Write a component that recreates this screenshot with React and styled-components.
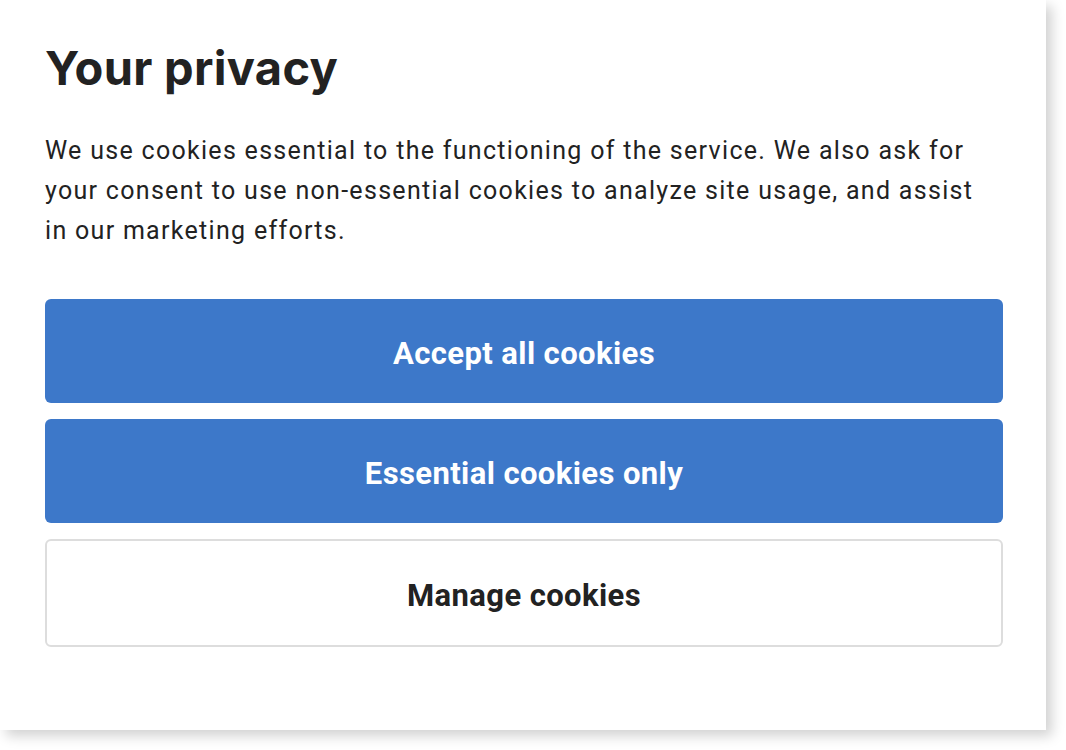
import React from 'react';
import styled, { createGlobalStyle } from 'styled-components';

const GlobalStyle = createGlobalStyle`
  html, body {
    margin: 0;
    padding: 0;
    background: #ffffff;
  }
  body {
    font-family: Roboto, "Liberation Sans", sans-serif;
    color: #222222;
  }
`;

const Page = styled.div`
  width: 1066px;
  height: 750px;
  overflow: hidden;
`;

const Panel = styled.div`
  width: 1046px;
  height: 730px;
  box-sizing: border-box;
  background: #ffffff;
  box-shadow: 6px 6px 12px rgba(0, 0, 0, 0.18);
  padding: 40px 43px 0 45px;
  display: flex;
  flex-direction: column;
`;

const Heading = styled.h1`
  margin: 0;
  font-family: Inter, "Open Sans", sans-serif;
  font-weight: 700;
  font-size: 47px;
  line-height: 56px;
  letter-spacing: 0.3px;
  color: #222222;
`;

const Text = styled.p`
  margin: 35px 0 0;
  max-width: 945px;
  font-size: 25px;
  line-height: 40px;
  letter-spacing: 1.3px;
  color: #222222;
`;

const Actions = styled.div`
  margin-top: 48px;
  display: flex;
  flex-direction: column;
  gap: 16px;
`;

const Button = styled.button`
  height: ${({ $outline }) => ($outline ? '108px' : '104px')};
  padding: 4px 0 0;
  border-radius: 6px;
  border: ${({ $outline }) => ($outline ? '2px solid #dddddd' : 'none')};
  background: ${({ $outline }) => ($outline ? '#ffffff' : '#3d78c9')};
  color: ${({ $outline }) => ($outline ? '#222222' : '#ffffff')};
  font-family: Roboto, "Liberation Sans", sans-serif;
  font-weight: 700;
  font-size: 31px;
  letter-spacing: 0.4px;
  cursor: pointer;
`;

const App = () => (
  <Page>
    <GlobalStyle />
    <Panel>
      <Heading>Your privacy</Heading>
      <Text>
        We use cookies essential to the functioning of the service. We also ask for
        your consent to use non-essential cookies to analyze site usage, and assist
        in our marketing efforts.
      </Text>
      <Actions>
        <Button>Accept all cookies</Button>
        <Button>Essential cookies only</Button>
        <Button $outline>Manage cookies</Button>
      </Actions>
    </Panel>
  </Page>
);

export default App;
